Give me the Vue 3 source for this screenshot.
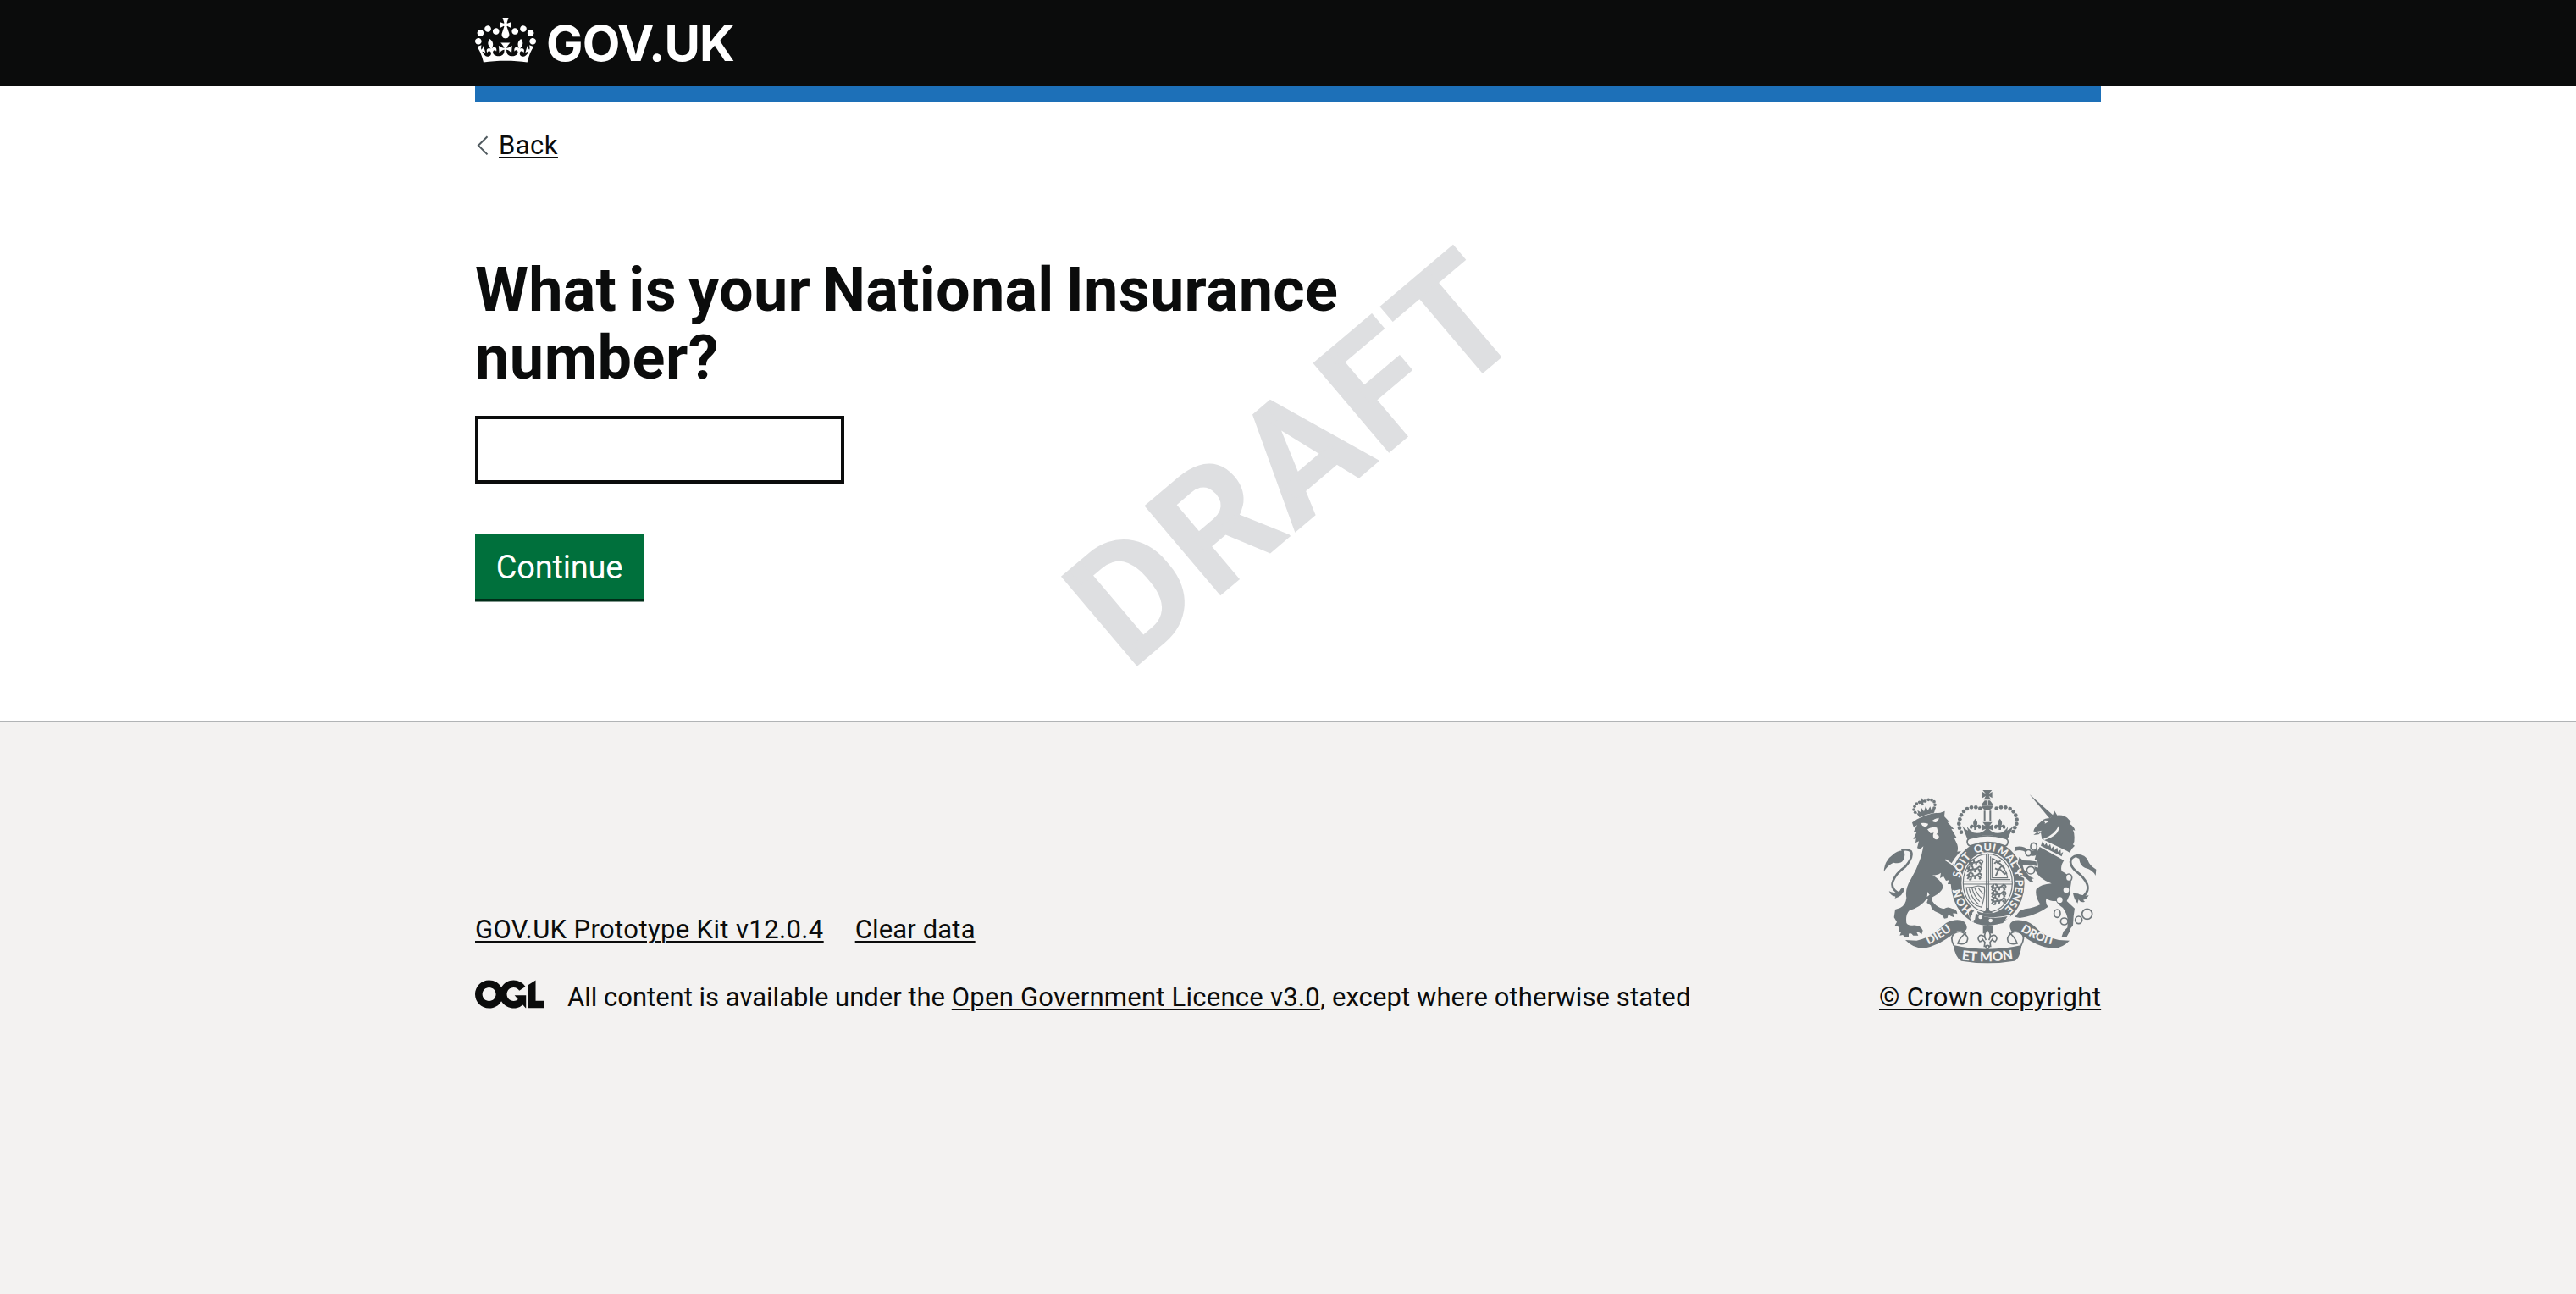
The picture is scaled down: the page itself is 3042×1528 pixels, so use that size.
<script setup>
import { ref } from 'vue'

const niNumber = ref('')

// Pearls on the arches of the large crown above the shield
const pearls = [
  [348, 218, 7], [342, 203, 7], [340, 188, 7], [343, 172, 7], [348, 157, 7], [357, 144, 7],
  [369, 135, 7], [384, 130, 7], [400, 130, 7], [415, 134, 7],
  [538, 202, 7], [544, 188, 7], [545, 173, 7], [541, 158, 7], [533, 145, 7],
  [521, 135, 7], [505, 130, 7], [489, 130, 7], [473, 134, 7], [532, 216, 7]
]
const smallPearls = [
  [185, 148], [180, 138], [183, 127], [190, 117], [200, 112], [221, 108], [232, 103], [243, 104], [252, 110], [255, 121], [252, 132]
]
// Small passant beasts in the first and fourth quarters
const beasts = [[366, 322], [362, 346], [362, 370], [448, 410], [448, 434], [448, 458]]
const chain = [
  [605, 269, 11, 13], [586, 291, 10, 11], [594, 353, 14, 13], [729, 379, 11, 13],
  [688, 506, 11, 14], [713, 534, 13, 12], [764, 529, 12, 13], [794, 508, 18, 18]
]
</script>

<template>
  <div class="page">
    <header class="header">
      <div class="container header-inner">
        <svg class="crown" viewBox="0 0 132 97" width="72" height="53" aria-hidden="true">
          <path fill="currentColor" fill-rule="evenodd" d="M25 30.2c3.5 1.5 7.7-.2 9.1-3.7 1.5-3.6-.2-7.8-3.9-9.2-3.6-1.4-7.6.3-9.1 3.9-1.4 3.5.3 7.5 3.9 9zM9 39.5c3.6 1.5 7.8-.2 9.2-3.7 1.5-3.6-.2-7.8-3.9-9.1-3.6-1.5-7.6.2-9.1 3.8-1.4 3.5.3 7.5 3.8 9zM4.4 57.2c3.5 1.5 7.7-.2 9.1-3.8 1.5-3.6-.2-7.7-3.9-9.1-3.5-1.5-7.6.3-9.1 3.8-1.4 3.5.3 7.6 3.9 9.1zm38.3-21.4c3.5 1.5 7.7-.2 9.1-3.8 1.5-3.6-.2-7.7-3.9-9.1-3.6-1.5-7.6.3-9.1 3.8-1.3 3.6.4 7.7 3.9 9.1zm64.4-5.6c-3.6 1.5-7.8-.2-9.1-3.7-1.5-3.6.2-7.8 3.8-9.2 3.6-1.4 7.7.3 9.2 3.9 1.3 3.5-.4 7.5-3.9 9zm15.9 9.3c-3.6 1.5-7.7-.2-9.1-3.7-1.5-3.6.2-7.8 3.7-9.1 3.6-1.5 7.7.2 9.2 3.8 1.5 3.5-.3 7.5-3.8 9zm4.7 17.7c-3.6 1.5-7.8-.2-9.2-3.8-1.5-3.6.2-7.7 3.9-9.1 3.6-1.5 7.7.3 9.2 3.8 1.3 3.5-.4 7.6-3.9 9.1zM89.3 35.8c-3.6 1.5-7.8-.2-9.2-3.8-1.4-3.6.2-7.7 3.9-9.1 3.6-1.5 7.7.3 9.2 3.8 1.4 3.6-.3 7.7-3.9 9.1zM69.7 17.7l8.9 4.7V9.3l-8.9 2.8c-.2-.3-.5-.6-.9-.9L72.4 0H59.6l3.5 11.2c-.3.3-.6.5-.9.9l-8.8-2.8v13.1l8.8-4.7c.3.3.6.7.9.9l-5 15.4v.1c-.2.8-.4 1.6-.4 2.4 0 4.1 3.1 7.5 7 8.1h.2c.3 0 .7.1 1 .1.4 0 .7 0 1-.1h.2c4-.6 7.1-4.1 7.1-8.1 0-.8-.1-1.7-.4-2.4V34l-5.1-15.4c.4-.2.7-.6 1-.9zM66 92.8c16.9 0 32.8 1.1 47.1 3.2 4-16.9 8.9-26.7 14-33.5l-9.6-3.4c1 4.9 1.1 7.2 0 10.2-1.5-1.4-3-4.3-4.2-8.7L108.6 76c2.8-2 5-3.2 7.5-3.3-4.4 9.4-10 11.9-13.6 11.2-4.3-.8-6.3-4.6-5.6-7.9 1-4.7 5.7-5.9 8-.5 4.3-8.7-3-11.4-7.6-8.8 7.1-7.2 7.9-13.5 2.1-21.1-8 6.1-8.1 12.3-4.5 20.8-4.7-5.4-12.1-2.5-9.5 6.2 3.4-5.2 7.9-2 7.2 3.1-.6 4.3-6.4 7.8-13.5 7.2-10.3-.9-10.9-8-11.2-13.8 2.5-.5 7.1 1.8 11 7.3L80.2 60c-4.1 4.4-8 5.3-12.3 5.4 1.4-4.4 8-11.6 8-11.6H55.5s6.4 7.2 7.9 11.6c-4.2-.1-8-1-12.3-5.4l1.4 16.4c3.9-5.5 8.5-7.7 10.9-7.3-.3 5.8-.9 12.8-11.1 13.8-7.2.6-12.9-2.9-13.5-7.2-.7-5 3.8-8.3 7.1-3.1 2.7-8.7-4.6-11.6-9.4-6.2 3.7-8.5 3.6-14.7-4.6-20.8-5.8 7.6-5 13.9 2.2 21.1-4.7-2.6-11.9.1-7.7 8.8 2.3-5.5 7.1-4.2 8.1.5.7 3.3-1.3 7.1-5.7 7.9-3.5.7-9-1.8-13.5-11.2 2.5.1 4.7 1.3 7.5 3.3l-4.7-15.4c-1.2 4.4-2.7 7.2-4.3 8.7-1.1-3-.9-5.3 0-10.2l-9.5 3.4c5 6.9 9.9 16.7 14 33.5 14.8-2.1 30.8-3.2 47.7-3.2z" />
        </svg>
        <span class="logotype">GOV.UK</span>
      </div>
    </header>

    <div class="container main-wrap">
      <div class="blue-bar"></div>
      <a class="back" href="#">
        <svg width="14" height="24" viewBox="0 0 14 24" aria-hidden="true">
          <path d="M12.5 1.2 1.9 11.8 12.5 22.4" fill="none" stroke="#505a5f" stroke-width="2" />
        </svg>
        <span class="link">Back</span>
      </a>
      <main class="main">
        <h1 class="title">
          <label for="ni"><span class="title-first">What is your National Insurance</span><br><span class="title-last">number?</span></label>
        </h1>
        <input id="ni" v-model="niNumber" class="input" type="text" spellcheck="false">
        <button class="button" type="button">Continue</button>
      </main>
    </div>

    <svg class="watermark" width="840" height="850" viewBox="1130 100 840 850" aria-hidden="true">
      <text transform="translate(1333.4 793.6) rotate(-40.27)" x="0" y="0">DRAFT</text>
    </svg>

    <footer class="footer">
      <div class="container footer-inner">
        <div class="footer-meta">
          <nav class="footer-links">
            <a class="link kit" href="#">GOV.UK Prototype Kit v12.0.4</a>
            <a class="link clear" href="#">Clear data</a>
          </nav>
          <div class="licence">
            <svg class="ogl" viewBox="0 0 483.2 195.7" width="82" height="34" aria-hidden="true">
              <path fill="currentColor" d="M421.5 142.8V.1l-50.7 32.3v161.1h112.4v-50.7zm-122.3-9.6A47.12 47.12 0 0 1 221 97.8c0-26 21.1-47.1 47.1-47.1 16.7 0 31.4 8.7 39.7 21.8l42.7-27.2A97.63 97.63 0 0 0 268.1 0c-36.5 0-68.3 20.1-85.1 49.7A98 98 0 0 0 97.8 0C43.9 0 0 43.9 0 97.8s43.9 97.8 97.8 97.8c36.5 0 68.3-20.1 85.1-49.7a97.76 97.76 0 0 0 149.6 25.4l19.4 22.2h3v-87.8h-80l24.3 27.5zM97.8 145c-26 0-47.1-21.1-47.1-47.1s21.1-47.1 47.1-47.1 47.1 21.1 47.1 47.1S123.8 145 97.8 145" />
            </svg>
            <span class="licence-text">All content is available under the <a class="link ogl-link" href="#">Open Government Licence v3.0</a><span class="except">, except where otherwise stated</span></span>
          </div>
        </div>

        <div class="copyright">
          <svg class="crest" width="262" height="210" viewBox="57 60 786 630" aria-hidden="true">
            <defs>
              <path id="garter" d="M442 512a99 114 0 0 1 0-228a99 114 0 0 1 0 228" />
              <path id="scroll-l" d="M214 623Q270 604 330 553" />
              <path id="scroll-r" d="M550 560Q606 604 688 621" />
              <path id="scroll-m" d="M346 670Q442 682 536 668" />
              <path id="fleur" d="M0-24C9-14 9-6 4 2C8-4 20-6 20 6C20 12 14 14 10 10C11 5 6 4 4 9L4 16H-4L-4 9C-6 4-11 5-10 10C-14 14-20 12-20 6C-20-6-8-4-4 2C-9-6-9-14 0-24Z" />
            </defs>

            <g class="fill">
              <!-- large crown -->
              <path d="M424 69H457L446 82L458 75V97L446 90L453 103H428L435 90L423 97V75L435 82Z" />
              <path d="M431 106H438V120H420ZM443 106H450L461 120H443Z" />
              <path d="M421 124h39q-2 16-20 17-17-1-19-17z" />
              <circle v-for="(p, i) in pearls" :key="'p' + i" :cx="p[0]" :cy="p[1]" :r="p[2]" />
              <path d="M428 142h6v38h-6zM448 142h6v38h-6z" />
              <path d="M352 196Q360 208 372 212L368 198Q380 214 392 220Q420 226 436 206L420 212V190L434 196L424 182H458L448 196L462 190V212L446 206Q462 226 490 220Q504 214 514 198L511 212Q524 206 533 196L512 243Q442 216 370 243Z" />
              <use href="#fleur" transform="translate(398 194)" />
              <use href="#fleur" transform="translate(485 194)" />

              <!-- lion: small crown -->
              <circle v-for="(p, i) in smallPearls" :key="'s' + i" :cx="p[0]" :cy="p[1]" r="5.5" />
              <path d="M204 97l9 3-1 5 7-2 2 9-8 1 3 9-7 2-3-9-7 3-3-8 8-3z" />
              <path d="M188 148L196 152L193 140L204 147L207 132L216 145L222 126L230 141L238 127L242 138L252 130L258 128L252 149Q222 154 200 166Z" />
              <!-- lion: head and body -->
              <path d="M174 184L192 172Q234 150 274 149L290 143L288 162L307 182L299 182L323 208L313 206L333 240L322 236L334 262Q338 276 334 287L351 284L340 296L326 312L318 330Q340 344 346 368Q352 386 351 410L346 426L338 418L330 429L324 416L314 420L311 402L300 402L304 388L294 390L285 374L273 381L276 362Q262 372 246 370Q276 388 284 410Q280 432 244 449Q240 458 252 470Q268 488 288 489Q300 480 316 489Q334 490 334 508Q326 504 318 506Q326 514 322 520Q308 514 302 510L299 522L288 524Q280 508 262 502Q244 496 240 478L226 468L230 456L222 450L236 440Q222 424 226 410Q232 436 224 456Q206 482 164 496Q150 510 154 540Q160 550 176 548Q204 546 212 566L208 580Q198 570 190 572L196 584L178 584Q170 572 162 578L162 590L146 590L142 582L130 584L136 570L126 570L128 554L113 548L120 536L110 520L114 492L132 486Q152 476 154 450Q148 420 168 388Q196 340 208 296L214 268L202 278L192 274L198 250L186 256L188 240L178 243L190 218L180 216L192 192L180 202Z" />
              <!-- lion: tail -->
              <path d="M74 358Q76 318 106 298Q122 282 144 284Q152 296 144 316Q134 332 108 326Q88 334 74 358Z" />
              <path d="M92 427Q112 438 130 426Q134 414 148 414Q142 446 112 453Q120 444 106 444Q96 438 92 427Z" />

              <!-- unicorn: horn, head, body -->
              <path d="M590 84L674 158L662 170Z" />
              <path d="M604 215Q604 202 634 178Q644 168 664 168L672 158L678 142L688 158Q716 156 730 174L736 180L734 190Q748 198 751 212L744 210Q750 224 749 236Q750 252 744 262L750 266Q738 276 732 290L722 284L634 242L630 220L622 226L604 228L618 217Z" />
              <path d="M626 270L712 318Q698 340 704 356Q728 366 738 394Q734 416 732 440L722 462L750 488L746 516L744 548L736 558L732 570L722 588L704 588L710 570L724 556L726 530Q722 504 708 486Q690 474 684 462Q658 462 650 452Q644 468 656 482Q620 508 576 518L556 522L538 518L556 496L574 490Q608 486 628 474Q608 444 614 420Q630 402 668 400Q620 382 610 352Q598 322 626 270Z" />
              <path d="M622 292Q604 314 578 290Q562 276 536 286L540 270Q566 264 586 280Q604 292 616 272Z" />
              <!-- unicorn: tail -->
              <path d="M758 298Q784 294 796 316Q802 336 826 350L824 372Q816 352 786 344Q768 336 766 312Q746 304 758 298Z" />
              <path d="M744 434L762 436Q774 444 800 442Q792 456 780 458L786 464Q772 470 764 456L760 470Q748 456 744 434Z" />

              <!-- garter ring -->
              <ellipse cx="442" cy="399" rx="130" ry="150" />
              <path class="outlined" d="M614 322Q590 318 566 318L554 306L548 328L560 348L550 356L556 370L574 378L592 394L604 394L596 384L606 382L590 374L570 350L566 336Q590 330 616 338Z" />
              <!-- motto scroll -->
              <path d="M150 600L190 602Q240 592 294 540Q334 520 360 536Q378 560 356 572Q338 564 328 572Q266 622 214 630Q176 628 150 600Z" />
              <path d="M732 602L694 600Q642 590 606 550Q580 526 538 530Q508 540 528 572Q544 564 556 576Q610 624 676 630Q706 628 732 602Z" />
              <path d="M320 618Q442 646 562 618Q556 668 536 674Q442 690 348 674Q328 664 320 618Z" />
              <path d="M425 551h34v26h-34z" />
            </g>

            <g class="line">
              <path d="M130 436Q96 420 106 392Q116 364 150 340Q180 306 170 286Q158 276 136 282" stroke-width="8" />
              <path d="M772 450Q804 432 794 402Q784 378 754 356Q726 330 740 310Q754 296 776 304" stroke-width="8" />
              <path d="M322 620Q306 590 324 576Q340 566 354 574Q378 588 368 606Q358 618 336 612Q344 588 366 574" stroke-width="5" />
              <path d="M560 620Q576 590 562 578Q544 566 528 574Q506 590 514 606Q524 618 546 612Q538 588 518 574" stroke-width="5" />
            </g>

            <g class="cut">
              <ellipse cx="442" cy="398" rx="93" ry="109" />
              <path d="M205 186q14-2 26 2-2 11-14 10-9-3-12-12zM244 178q12-9 25-11-1 12-11 16-9 1-14-5z" />
              <path d="M228 208q16-12 34-6l4 16-6 8q12 2 8 14-10 8-18-2-4-10 1-18l-12 2z" />
              <path d="M636 178q12-4 22 2l-14 8q4-6-8-10zM616 216l18-4-12 10zM694 194q6 34-52 52l-4-4q40-14 56-48z" />
              <path d="M632 244L722 292L714 318L626 268Z" />
              <circle cx="720" cy="423" r="10" /><circle cx="697" cy="458" r="10" />
              <path d="M368 492Q388 474 408 488Q400 500 412 512Q464 528 524 510L520 522Q470 546 410 534Q388 520 392 538Q374 526 368 492Z" />
            </g>
            <g class="cut-line">
              <path d="M292 316Q336 342 350 370Q357 388 356 412L350 430" />
              <path d="M316 330Q332 300 362 276" />
              <path d="M318 424Q326 436 342 432" />
            </g>
            <!-- ermine roll under the crown -->
            <path class="roll" d="M372 262Q362 242 386 238Q442 224 498 238Q520 242 512 260Q508 270 496 264Q442 244 388 264Q378 270 372 262Z" />

            <g class="fill">
              <path d="M400 506Q450 530 512 516L496 540Q446 554 396 530Z" />
              <path d="M636 250l8 14 6-8 5 14 8-10 4 16 9-10 3 16 9-10 3 16 9-8 1 14 8-6-5 16-74-38z" />
              <path d="M376 496q12-10 18 2-10 4-6 14-10 2-8 14-8-14-4-30z" />
            </g>
            <g class="cut"><circle cx="416" cy="519" r="7" /><circle cx="452" cy="531" r="7" /></g>

            <!-- shield quarters -->
            <g class="line" stroke-width="3.5">
              <ellipse cx="442" cy="398" rx="87" ry="103" />
              <path d="M437 294V494M445 294V494M354 394H530M354 402H530" />
              <path d="M452 304V386H522M458 310V380H512Q508 338 458 310" />
              <path d="M366 414Q390 414 408 408L430 412Q434 440 420 484L402 478Q372 460 366 414ZM376 418Q384 452 410 474M386 416Q394 446 414 464M396 416Q404 438 420 452M408 414Q414 426 426 436" />
              <path d="M470 374L480 352L468 346M480 352L492 336L502 348M492 336L478 324L488 320M486 350L502 366L510 362M466 330Q472 318 480 330" stroke-width="6" />
              <g v-for="(b, i) in beasts" :key="'b' + i" :transform="`translate(${b[0]} ${b[1]})`">
                <path d="M6 2L14-4L12 6L26 4L40 2L50-6L58-2M14 6L8 14M22 6L20 15L14 16M36 4L34 14M46 2L54 10L50 15M58-2L56 6M26 4Q30-8 20-6" stroke-width="6" />
              </g>
            </g>
            <g class="fill">
              <path d="M436 486h10v8q10 4 16 12h-40q8-8 14-12z" />
            </g>

            <!-- harness chain -->
            <g class="line" stroke-width="5">
              <ellipse v-for="(c, i) in chain" :key="'c' + i" :cx="c[0]" :cy="c[1]" :rx="c[2]" :ry="c[3]" class="ring" />
            </g>

            <!-- fleur-de-lis pendant -->
            <g class="line pendant" stroke-width="5">
              <path d="M441 562Q424 582 436 600Q428 580 414 584Q402 594 414 606Q424 604 424 598L432 608L430 622H452L450 608L458 598Q460 604 468 606Q480 594 468 584Q454 580 446 600Q458 582 441 562Z" />
              <circle cx="441" cy="625" r="6" />
            </g>

            <g class="motto">
              <text font-size="38"><textPath href="#garter" startOffset="15.5%">HON</textPath></text>
              <text font-size="38"><textPath href="#garter" startOffset="34%">SOIT</textPath></text>
              <text font-size="38"><textPath href="#garter" startOffset="48.5%">QUI</textPath></text>
              <text font-size="37"><textPath href="#garter" startOffset="60.8%">MAL</textPath></text>
              <text font-size="37"><textPath href="#garter" startOffset="70%">Y</textPath></text>
              <text font-size="37"><textPath href="#garter" startOffset="81.8%">PENSE</textPath></text>
              <text font-size="41"><textPath href="#scroll-l" startOffset="50%">DIEU</textPath></text>
              <text font-size="41"><textPath href="#scroll-r" startOffset="49%">DROIT</textPath></text>
              <text font-size="47"><textPath href="#scroll-m" startOffset="50%">ET MON</textPath></text>
            </g>
          </svg>
          <a class="link crown-link" href="#">© Crown copyright</a>
        </div>
      </div>
    </footer>
  </div>
</template>

<style>
body {
  margin: 0;
  background: #f3f2f1;
}
</style>

<style scoped>
.page {
  position: relative;
  min-height: 1528px;
  display: flex;
  flex-direction: column;
  background: #fff;
  color: #0b0c0c;
  font-family: "Roboto", "Liberation Sans", sans-serif;
  font-size: 31px;
  line-height: 40px;
}
.container {
  width: 1920px;
  margin: 0 auto;
}
.header {
  height: 101px;
  background: #0b0c0c;
  color: #fff;
}
.header-inner {
  display: flex;
  align-items: flex-start;
}
.crown {
  margin-top: 21px;
}
.logotype {
  margin: 21px 0 0 12px;
  font-family: "Inter", sans-serif;
  font-weight: 700;
  font-size: 58px;
  line-height: 60px;
  letter-spacing: -0.9px;
}
.main-wrap {
  height: 750px;
}
.blue-bar {
  height: 20px;
  background: #1d70b8;
}
.back {
  display: flex;
  align-items: center;
  gap: 12px;
  width: max-content;
  margin-top: 31px;
  padding-left: 2px;
  color: inherit;
  text-decoration: none;
  letter-spacing: 0.45px;
}
.link {
  color: inherit;
  text-decoration: underline;
  text-decoration-thickness: 2px;
  text-underline-offset: 3px;
}
.main {
  display: flex;
  flex-direction: column;
  align-items: flex-start;
  padding-top: 111px;
}
.title {
  margin: 0;
  font-size: 72px;
  line-height: 80px;
  font-weight: 700;
}
.title-first {
  letter-spacing: 0.25px;
  word-spacing: -4px;
}
.title-last {
  letter-spacing: 0.5px;
}
.input {
  box-sizing: border-box;
  width: 436px;
  height: 80px;
  margin-top: 28px;
  padding: 10px;
  border: 4px solid #0b0c0c;
  border-radius: 0;
  background: #fff;
  font: inherit;
  outline: 0;
}
.button {
  width: 199px;
  height: 76px;
  margin-top: 60px;
  padding: 2px 0 0;
  border: 0;
  background: #00703c;
  box-shadow: 0 3.5px 0 #002d18;
  color: #fff;
  font-family: inherit;
  font-size: 38px;
  line-height: 38px;
  letter-spacing: -0.2px;
}
.watermark {
  position: absolute;
  left: 1130px;
  top: 100px;
  pointer-events: none;
}
.watermark text {
  font-size: 193px;
  font-weight: 700;
  letter-spacing: 3.8px;
  fill: #dedfe1;
  stroke: #dedfe1;
  stroke-width: 1.6px;
}
.footer {
  flex: 1;
  border-top: 2px solid #b1b4b6;
  background: #f3f2f1;
}
.footer-inner {
  display: flex;
  justify-content: space-between;
  align-items: flex-end;
  height: 345px;
}
.footer-links {
  display: flex;
  gap: 37px;
  margin-bottom: 39px;
}
.kit {
  letter-spacing: 0.38px;
}
.clear {
  letter-spacing: 0.14px;
}
.licence {
  display: flex;
  align-items: flex-start;
}
.ogl {
  margin: 0 27px 0 0;
}
.licence-text {
  padding-top: 1px;
}
.ogl-link {
  letter-spacing: 0.24px;
}
.except {
  letter-spacing: 0.1px;
}
.copyright {
  width: 262px;
  white-space: nowrap;
}
.crest {
  display: block;
  margin-bottom: 18px;
}
.crown-link {
  letter-spacing: 0.32px;
}
.fill {
  fill: #6f777b;
}
.outlined {
  stroke: #f3f2f1;
  stroke-width: 8px;
  paint-order: stroke;
}
.cut {
  fill: #f3f2f1;
}
.cut-line {
  fill: none;
  stroke: #f3f2f1;
  stroke-width: 5px;
}
.roll {
  fill: #f3f2f1;
  stroke: #6f777b;
  stroke-width: 5px;
}
.line {
  fill: none;
  stroke: #6f777b;
}
.line .ring,
.pendant {
  fill: #f3f2f1;
}
.motto text {
  fill: #f3f2f1;
  font-family: "Lato", sans-serif;
  font-weight: 900;
  text-anchor: middle;
}
</style>
